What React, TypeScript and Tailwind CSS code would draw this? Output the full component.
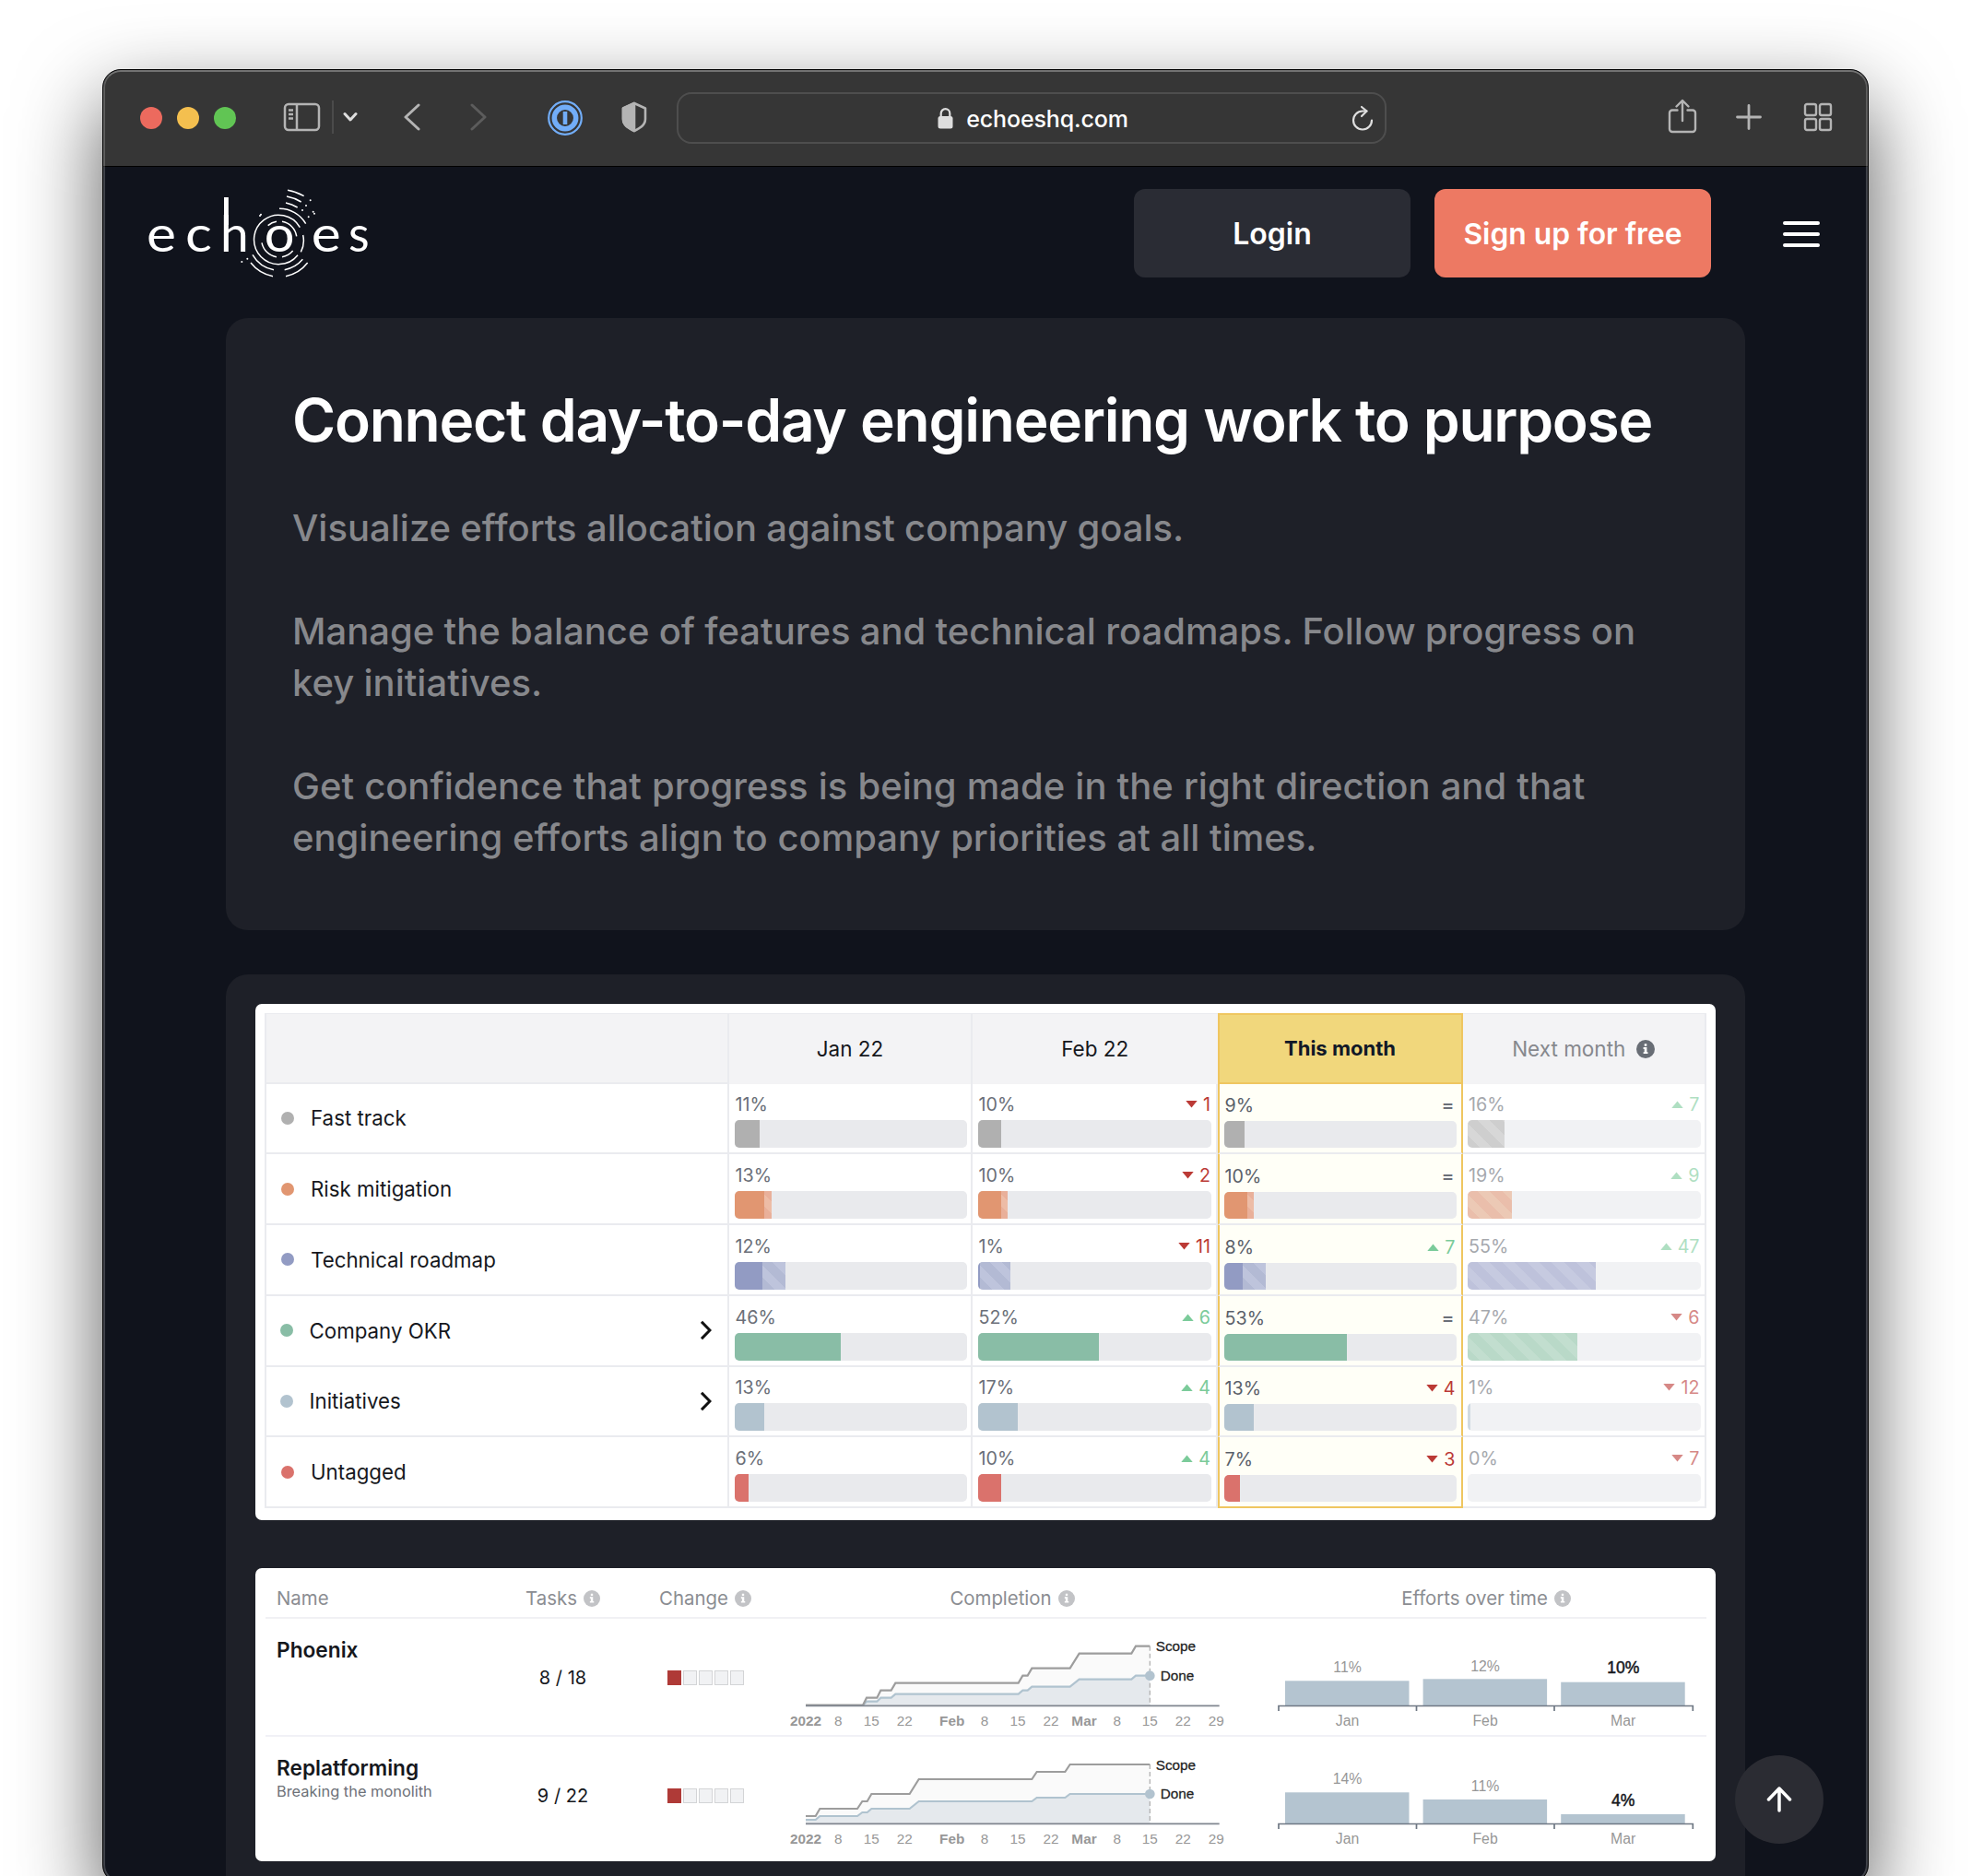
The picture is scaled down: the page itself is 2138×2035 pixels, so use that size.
import React from "react";

type Tone = "gray" | "orange" | "blue" | "green" | "steel" | "red";

const solid: Record<Tone, string> = {
  gray: "bg-[#b0b0b0]",
  orange: "bg-[#e19671]",
  blue: "bg-[#929bc3]",
  green: "bg-[#89bda6]",
  steel: "bg-[#b2c3cf]",
  red: "bg-[#da726c]",
};

const extraFill: Partial<Record<Tone, string>> = {
  orange: "bg-[repeating-linear-gradient(45deg,#e9b09a_0_9.5px,#edbca6_9.5px_19px)]",
  blue: "bg-[repeating-linear-gradient(45deg,#b3bad4_0_9.5px,#bec4dc_9.5px_19px)]",
};

const forecast: Record<Tone, string> = {
  gray: "bg-[repeating-linear-gradient(45deg,#afafaf_0_9.5px,#bebebe_9.5px_19px)]",
  orange: "bg-[repeating-linear-gradient(45deg,#dd9475_0_9.5px,#e1a685_9.5px_19px)]",
  blue: "bg-[repeating-linear-gradient(45deg,#939bc4_0_9.5px,#a1a8cd_9.5px_19px)]",
  green: "bg-[repeating-linear-gradient(45deg,#8bc0a5_0_9.5px,#9bc9b0_9.5px_19px)]",
  steel: "bg-[#b2c3cf]",
  red: "bg-[#da726c]",
};

type Cell = { pct: number; extra?: number; delta?: number | "=" };
type Row = { name: string; tone: Tone; nested?: boolean; cells: Cell[] };

const rows: Row[] = [
  { name: "Fast track", tone: "gray", cells: [{ pct: 11 }, { pct: 10, delta: -1 }, { pct: 9, delta: "=" }, { pct: 16, delta: 7 }] },
  { name: "Risk mitigation", tone: "orange", cells: [{ pct: 13, extra: 3 }, { pct: 10, extra: 3, delta: -2 }, { pct: 10, extra: 3, delta: "=" }, { pct: 19, delta: 9 }] },
  { name: "Technical roadmap", tone: "blue", cells: [{ pct: 12, extra: 10 }, { pct: 1, extra: 13, delta: -11 }, { pct: 8, extra: 10, delta: 7 }, { pct: 55, delta: 47 }] },
  { name: "Company OKR", tone: "green", nested: true, cells: [{ pct: 46 }, { pct: 52, delta: 6 }, { pct: 53, delta: "=" }, { pct: 47, delta: -6 }] },
  { name: "Initiatives", tone: "steel", nested: true, cells: [{ pct: 13 }, { pct: 17, delta: 4 }, { pct: 13, delta: -4 }, { pct: 1, delta: -12 }] },
  { name: "Untagged", tone: "red", cells: [{ pct: 6 }, { pct: 10, delta: 4 }, { pct: 7, delta: -3 }, { pct: 0, delta: -7 }] },
];

function Delta({ value }: { value?: number | "=" }) {
  if (value === undefined) return null;
  if (value === "=") return <span className="pr-px text-[21px] font-medium text-[#6b6f78]">=</span>;
  const up = value > 0;
  return (
    <span className={up ? "flex items-center gap-[6px] text-[#7bcb9a]" : "flex items-center gap-[6px] text-[#bb3a36]"}>
      <svg className="h-[8px] w-[13px]" viewBox="0 0 13 8" fill="currentColor">
        {up ? <path d="M0.300 8L6.500 0.500L12.700 8z" /> : <path d="M0.300 0H12.700L6.500 7.500z" />}
      </svg>
      {Math.abs(value)}
    </span>
  );
}

function BarCell({ cell, tone, col, last }: { cell: Cell; tone: Tone; col: number; last: boolean }) {
  const current = col === 2;
  const next = col === 3;
  const frame = current
    ? last
      ? "border-x-2 border-b-2 border-[#efc660] bg-[#fffff7] pl-[5px] pr-[5px]"
      : "border-x-2 border-x-[#efc660] border-b-2 border-b-[#eaebef] bg-[#fffff7] pl-[5px] pr-[5px]"
    : next
      ? "border-b-2 border-r-2 border-[#eaebef] pl-[5.5px] pr-[4.5px]"
      : "border-b-2 border-r-2 border-[#eaebef] pl-[5.5px] pr-[4.5px]";
  return (
    <div className={`flex min-w-0 flex-col justify-end pb-[5px] ${frame}`}>
      <div className={next ? "flex flex-col opacity-60" : "flex flex-col"}>
        <div className={`flex h-[26px] items-center justify-between px-px text-[19.7px] leading-[26px] ${current ? "text-[#5a5f69]" : "text-[#6b6f78]"}`}>
          <span>{cell.pct}%</span>
          <Delta value={cell.delta} />
        </div>
        <div className={`mt-[4px] flex overflow-hidden rounded-[5px] bg-[#e9eaed] ${current ? "h-[29px]" : "h-[30px]"}`}>
          <div className={next ? forecast[tone] : solid[tone]} style={{ width: `${cell.pct}%` }} />
          {cell.extra && <div className={extraFill[tone]} style={{ width: `${cell.extra}%` }} />}
        </div>
      </div>
    </div>
  );
}

function InfoIcon({ className }: { className: string }) {
  return (
    <svg className={className} viewBox="0 0 20 20">
      <circle cx="10" cy="10" r="10" fill="currentColor" />
      <path d="M8.7 4.3h2.6v2.4H8.7zM7.6 8.1h3.8v5.2h1.1v1.8H7.6v-1.8h1.1V9.9H7.6z" fill="#fff" />
    </svg>
  );
}

const allocationGrid = "grid grid-cols-[504.5px_264px_265.5px_266px_264.5px]";

function AllocationTable() {
  return (
    <div className="h-[560px] w-[1584px] rounded-[7px] bg-white pl-[10px] pt-[10px]">
      <div className={`${allocationGrid} h-[76.500px] w-[1564.500px] text-[22.5px] text-[#16181d]`}>
        <div className="border-2 border-t border-[#eaebef] bg-[#f3f3f5]" />
        <div className="flex items-center justify-center border-r-2 border-t border-[#eaebef] bg-[#f3f3f5]">Jan 22</div>
        <div className="flex items-center justify-center border-t border-[#eaebef] bg-[#f3f3f5]">Feb 22</div>
        <div className="flex items-center justify-center border-2 border-[#efc660] bg-[#f1d77c] text-[22px] font-bold text-[#111827]">This month</div>
        <div className="flex items-center justify-center gap-[12px] border-r-2 border-t border-[#eaebef] bg-[#f3f3f5] text-[#86888d]">
          Next month
          <InfoIcon className="size-[20px] text-[#686d75]" />
        </div>
      </div>
      {rows.map((row, i) => (
        <div key={row.name} className={`${allocationGrid} h-[76.800px] w-[1564.500px]`}>
          <div className={`flex items-center border-x-2 border-b-2 border-[#eaebef] pr-[17px] ${row.nested ? "pl-[15px]" : "pl-[16px]"}`}>
            <span className={`size-[14px] rounded-full ${solid[row.tone]}`} />
            <span className={`flex-1 text-[22.3px] text-[#16181d] ${row.nested ? "pl-[18px]" : "pl-[18.500px]"}`}>{row.name}</span>
            {row.nested && (
              <svg className="h-[22px] w-[12px]" viewBox="0 0 12 22" fill="none" stroke="#111" strokeWidth="3">
                <path d="M1 1.8L10 11L1 20.2" />
              </svg>
            )}
          </div>
          {row.cells.map((cell, c) => (
            <BarCell key={c} cell={cell} tone={row.tone} col={c} last={i === rows.length - 1} />
          ))}
        </div>
      ))}
    </div>
  );
}

const ticks: [string, number, boolean][] = [
  ["2022", 102, true], ["8", 208, false], ["15", 316, false], ["22", 424, false],
  ["Feb", 578, true], ["8", 684, false], ["15", 792, false], ["22", 900, false],
  ["Mar", 1008, true], ["8", 1115, false], ["15", 1222, false], ["22", 1330, false], ["29", 1438, false],
];

function CompletionChart({ scope, done, scopeY, doneY }: { scope: string; done: string; scopeY: number; doneY: number }) {
  return (
    <svg className="h-[128px] w-[520px] shrink-0 font-['Liberation_Sans',sans-serif]" viewBox="0 228 1560 384">
      <polygon points={`102,511 ${scope} 1222,511`} fill="#fafafa" />
      <polygon points={`${done} 1222,511 102,511`} fill="#e5e9ed" />
      <line x1="1222" x2="1222" y1={scopeY} y2="511" stroke="#b3b3b3" strokeWidth="4" strokeDasharray="15 9" />
      <polyline points={done} fill="none" stroke="#b0c3cf" strokeWidth="6.500" />
      <polyline points={scope} fill="none" stroke="#9d9d9d" strokeWidth="6.500" />
      <line x1="102" x2="1448" y1="511" y2="511" stroke="#80868f" strokeWidth="5.500" />
      <circle cx="1222" cy={doneY} r="16" fill="#b2c3cf" />
      <text x="1241" y={scopeY + 17} fontSize="46" fill="#1f1f1f" stroke="#1f1f1f" strokeWidth="0.8">Scope</text>
      <text x="1256" y={doneY + 16} fontSize="46" fill="#1f1f1f" stroke="#1f1f1f" strokeWidth="0.8">Done</text>
      {ticks.map(([label, x, bold]) => (
        <text key={x} x={x} y="577" textAnchor="middle" fontSize="46" fontWeight={bold ? 700 : 400} fill="#979797">
          {label}
        </text>
      ))}
    </svg>
  );
}

type Effort = { label: string; month: string; top: number; text: number };

function EffortsChart({ data }: { data: Effort[] }) {
  return (
    <svg className="h-[128px] w-[464px] font-['Liberation_Sans',sans-serif]" viewBox="0 0 464 128">
      {data.map((d, i) => {
        const x = 14 + i * 149.6;
        const now = i === 2;
        return (
          <g key={d.month} textAnchor="middle">
            <rect x={x} y={d.top} width="134.5" height={94 - d.top} fill="#b4c4d0" />
            <text x={x + 67.5} y={d.text} fontSize={now ? 17.5 : 15.8} fill={now ? "#16181d" : "#979797"} stroke={now ? "#16181d" : "none"} strokeWidth="0.5">
              {d.label}
            </text>
            <text x={x + 67.5} y="116.300" fontSize="15.800" fill="#979797">{d.month}</text>
          </g>
        );
      })}
      <path d="M7 100V94.5H456.3V100M156.5 94.5V100M306 94.5V100" fill="none" stroke="#6f7884" strokeWidth="1.7" />
    </svg>
  );
}

const projects = [
  {
    name: "Phoenix",
    note: "",
    tasks: "8 / 18",
    scope: "102,509 288,509 300,485 334,485 346,461 380,461 394,437 794,437 808,413 824,413 838,389 962,389 992,341 1162,341 1176,317 1222,317",
    done: "288,509 300,497 334,497 346,485 380,485 394,473 794,473 808,461 824,461 838,449 962,449 992,425 1162,425 1176,413 1222,413",
    scopeY: 317,
    doneY: 413,
    efforts: [
      { label: "11%", month: "Jan", top: 67.3, text: 58.3 },
      { label: "12%", month: "Feb", top: 65.3, text: 56.7 },
      { label: "10%", month: "Mar", top: 68.7, text: 59 },
    ],
  },
  {
    name: "Replatforming",
    note: "Breaking the monolith",
    tasks: "9 / 22",
    scope: "102,486 134,486 148,462 270,462 286,438 302,438 316,414 440,414 470,366 838,366 854,342 946,342 962,318 1222,318",
    done: "102,498 134,498 148,486 270,486 286,474 302,474 316,462 440,462 470,438 838,438 854,426 946,426 962,414 1222,414",
    scopeY: 318,
    doneY: 414,
    efforts: [
      { label: "14%", month: "Jan", top: 60.3, text: 51.3 },
      { label: "11%", month: "Feb", top: 68, text: 59 },
      { label: "4%", month: "Mar", top: 84, text: 74.7 },
    ],
  },
];

const initiativeGrid = "grid grid-cols-[239px_167px_142px_524px_20px_464px_7px]";

function HeaderCell({ children }: { children: React.ReactNode }) {
  return (
    <div className="flex items-center justify-center gap-[7px]">
      {children}
      <InfoIcon className="size-[18px] text-[#c2c3c6]" />
    </div>
  );
}

function InitiativesTable() {
  return (
    <div className="h-[318px] w-[1584px] rounded-[7px] bg-white pl-[11.5px]">
      <div className={`${initiativeGrid} h-[55px] w-[1563px] border-b-2 border-[#f1f1f4] pt-[13px] text-[20.4px] text-[#8b8d92]`}>
        <div className="flex items-center pl-[12px]">Name</div>
        <HeaderCell>Tasks</HeaderCell>
        <HeaderCell>Change</HeaderCell>
        <HeaderCell>Completion</HeaderCell>
        <div />
        <HeaderCell>Efforts over time</HeaderCell>
        <div />
      </div>
      {projects.map((p, i) => (
        <div key={p.name} className={`${initiativeGrid} h-[128px] w-[1563px] ${i === 0 ? "border-b-2 border-[#f1f1f6]" : ""}`}>
          <div className="pl-[12px] pt-[20px]">
            <div className="text-[22.7px] leading-[28px] font-semibold text-[#16181d]">{p.name}</div>
            <div className="whitespace-nowrap text-[16.4px] leading-[22px] text-[#6d7178]">{p.note}</div>
          </div>
          <div className="flex items-center justify-center text-[20px] text-[#16181d]">{p.tasks}</div>
          <div className="flex items-center justify-center gap-[2px]">
            <span className="h-[16px] w-[15px] bg-[#af3a37]" />
            {[1, 2, 3, 4].map((n) => (
              <span key={n} className="h-[16px] w-[15px] border border-[#d3d4d6] bg-[#f1f2f4]" />
            ))}
          </div>
          <div className="flex justify-end">
            <CompletionChart scope={p.scope} done={p.done} scopeY={p.scopeY} doneY={p.doneY} />
          </div>
          <div />
          <EffortsChart data={p.efforts} />
          <div />
        </div>
      ))}
    </div>
  );
}

const specks: [number, number][] = [
  [560, 67], [546, 84], [534, 99], [569, 104], [573, 110], [554, 121], [399, 113], [396, 117], [355, 257], [337, 267],
];

function Logo() {
  return (
    <svg className="h-[110px] w-[260px] font-[Lato,sans-serif]" viewBox="0 0 780 330">
      <g fill="#fff" fontSize="165" textAnchor="middle">
        <text transform="translate(75 233) scale(1.100 1)">e</text>
        <text transform="translate(196 233) scale(1.100 1)">c</text>
        <text transform="translate(313 233)">h</text>
        <text transform="translate(459 233) scale(1.050 1)">o</text>
        <text transform="translate(611 233) scale(1.100 1)">e</text>
        <text transform="translate(718 233) scale(0.950 1)">s</text>
        <rect x="279" y="57" width="14.500" height="90" />
      </g>
      <g fill="none" stroke="#fff" strokeWidth="4.500">
        <path d="M422 149A57 57 0 0 1 450 136M468 136A57 57 0 0 1 515 184M402 205A58 58 0 0 0 450 251M468 251A58 58 0 0 0 503 231" />
        <path d="M526 155A80 80 0 1 0 519 245M536 180A80 80 0 0 1 529 235" />
        <path d="M459 94A99 99 0 0 1 545 143M372 244A101 101 0 0 0 441 293M476 293A101 101 0 0 0 535 259" />
        <path d="M366 270A121 121 0 0 0 438 314M480 314A121 121 0 0 0 551 270" />
        <path d="M480 75A120 120 0 0 1 518 90M483 54A141 141 0 0 1 530 72M486 34A161 161 0 0 1 539 53" />
      </g>
      {specks.map(([x, y]) => (
        <circle key={`${x}-${y}`} cx={x} cy={y} r="3" fill="#fff" />
      ))}
    </svg>
  );
}

function Toolbar() {
  return (
    <div className="flex h-[105px] items-center justify-between border-b border-black bg-[#363636] pl-[40px] pr-[38px] pb-[3px] text-[#b4b4b4]">
      <div className="flex w-[582px] shrink-0 items-center">
        <div className="flex gap-[16px] pt-[3px]">
          <span className="size-[24px] rounded-full bg-[#ec6a5e]" />
          <span className="size-[24px] rounded-full bg-[#f4bf4f]" />
          <span className="size-[24px] rounded-full bg-[#61c554]" />
        </div>
        <svg className="ml-[51px] h-[32px] w-[41px]" viewBox="0 0 41 32" fill="none" stroke="currentColor" strokeWidth="2.5">
          <rect x="2" y="2" width="37" height="28" rx="4" />
          <path d="M15 2V30M6 8.500h5M6 13h5M6 17.500h5" />
        </svg>
        <span className="ml-[12px] h-[36px] w-[2px] bg-[#4b4b4b]" />
        <svg className="ml-[10px] h-[12px] w-[16px]" viewBox="0 0 16 12" fill="none" stroke="#dedede" strokeWidth="3" strokeLinecap="round" strokeLinejoin="round">
          <path d="M2 2.500L8 9L14 2.500" />
        </svg>
        <svg className="ml-[50px] h-[30px] w-[18px]" viewBox="0 0 18 30" fill="none" stroke="currentColor" strokeWidth="3" strokeLinecap="round" strokeLinejoin="round">
          <path d="M16 2L2 15L16 28" />
        </svg>
        <svg className="ml-[54px] h-[30px] w-[18px] text-[#5c5c5c]" viewBox="0 0 18 30" fill="none" stroke="currentColor" strokeWidth="3" strokeLinecap="round" strokeLinejoin="round">
          <path d="M2 2L16 15L2 28" />
        </svg>
        <svg className="ml-[66px] mt-[2px] size-[38px]" viewBox="0 0 38 38" fill="none" stroke="#72adf8">
          <circle cx="19" cy="19" r="17.800" strokeWidth="2.200" />
          <circle cx="19" cy="19" r="11.700" strokeWidth="5.500" />
          <path d="M19 12V26" strokeWidth="4.600" />
        </svg>
        <svg className="ml-[41px] h-[34px] w-[30px]" viewBox="0 0 30 34" fill="none" stroke="currentColor" strokeWidth="2.600" strokeLinejoin="round">
          <path d="M15 2L27 7.500V19C27 26 21 29 15 32C9 29 3 26 3 19V7.500Z" />
          <path d="M15 2V32C9 29 3 26 3 19V7.500Z" fill="currentColor" />
        </svg>
      </div>
      <div className="mt-[3px] flex h-[56px] w-[770px] items-center rounded-[16px] border-2 border-[#4e4e4e] pr-[12px]">
        <div className="flex flex-1 items-center justify-center pl-[39px] text-[25px] tracking-[-0.005em] text-white">
          <svg className="mr-[14px] h-[24px] w-[17px]" viewBox="0 0 17 24" fill="#dedede">
            <rect x="0.500" y="10" width="16" height="13.500" rx="2.500" />
            <path d="M3.700 11V7a4.800 4.800 0 0 1 9.600 0v4" fill="none" stroke="#dedede" strokeWidth="2.200" />
          </svg>
          <span className="pt-[3px] font-medium">echoeshq.com</span>
        </div>
        <svg className="h-[28px] w-[24px]" viewBox="0 0 24 28" fill="none" stroke="#dedede" strokeWidth="2.200" strokeLinecap="round" strokeLinejoin="round">
          <path d="M22 16.500A10 10 0 1 1 12 6.500H16.500" />
          <path d="M11 2L16.500 6.500L11 12" />
        </svg>
      </div>
      <div className="ml-auto flex items-center">
        <svg className="mb-[2px] h-[38px] w-[32px]" viewBox="0 0 32 38" fill="none" stroke="currentColor" strokeWidth="2.400" strokeLinecap="round" strokeLinejoin="round">
          <path d="M10.500 12.500H5a3 3 0 0 0-3 3V33a3 3 0 0 0 3 3H27a3 3 0 0 0 3-3V15.500a3 3 0 0 0-3-3H21.500M16 24V2.500M9.500 8.500L16 2L22.500 8.500" />
        </svg>
        <svg className="ml-[42px] size-[28px]" viewBox="0 0 28 28" stroke="currentColor" strokeWidth="2.800" strokeLinecap="round">
          <path d="M14 1.500V26.500M1.500 14H26.500" />
        </svg>
        <svg className="ml-[45px] size-[32px]" viewBox="0 0 32 32" fill="none" stroke="currentColor" strokeWidth="2.400">
          <rect x="2" y="2" width="12" height="12" rx="2" />
          <rect x="18" y="2" width="12" height="12" rx="2" />
          <rect x="2" y="18" width="12" height="12" rx="2" />
          <rect x="18" y="18" width="12" height="12" rx="2" />
        </svg>
      </div>
    </div>
  );
}

export default function App() {
  return (
    <div className="h-[2035px] w-[2138px] overflow-hidden bg-white pl-[111px] pt-[75px] font-[Inter,sans-serif]">
      <div className="relative h-[1968px] w-[1916px] overflow-hidden rounded-[20px] border border-black bg-[#10131c] shadow-[0_36px_90px_rgba(0,0,0,0.65)]">
        <Toolbar />
        <header className="flex h-[164px] items-start pl-[38px] pt-[14px]">
          <Logo />
          <div className="ml-auto mr-[52px] mt-[10px] flex items-center">
            <button className="h-[96px] w-[300px] rounded-[12px] bg-[#2a2c34] pt-[2px] text-[32px] font-semibold text-white">Login</button>
            <button className="ml-[26px] h-[96px] w-[300px] rounded-[12px] bg-[#ed7963] pt-[2px] text-[31.8px] font-semibold text-white">Sign up for free</button>
            <div className="ml-[78px] mt-[2px] flex w-[40px] flex-col gap-[8px]">
              <span className="h-[4px] rounded-full bg-white" />
              <span className="h-[4px] rounded-full bg-white" />
              <span className="h-[4px] rounded-full bg-white" />
            </div>
          </div>
        </header>
        <main className="flex flex-col gap-[48px] px-[133px]">
          <section className="h-[664px] w-[1648px] rounded-[24px] bg-[#1e2028] px-[72px] pt-[71px]">
            <h1 className="whitespace-nowrap text-[64px] leading-[80px] font-semibold tracking-[-0.0195em] text-white [word-spacing:0.4px]">
              Connect day-to-day engineering work to purpose
            </h1>
            <div className="mt-[49px] flex flex-col gap-[56px] whitespace-nowrap text-[40px] leading-[56px] font-medium text-[#87888c]">
              <p className="[word-spacing:-0.4px]">Visualize efforts allocation against company goals.</p>
              <p className="[word-spacing:-0.35px]">
                Manage the balance of features and technical roadmaps. Follow progress on
                <br />
                key initiatives.
              </p>
              <p>
                <span className="[word-spacing:0.45px]">Get confidence that progress is being made in the right direction and that</span>
                <br />
                engineering efforts align to company priorities at all times.
              </p>
            </div>
          </section>
          <section className="flex h-[1100px] w-[1648px] flex-col gap-[52px] rounded-[24px] bg-[#1e2028] pl-[31.5px] pt-[32px]">
            <AllocationTable />
            <InitiativesTable />
          </section>
        </main>
        <button className="absolute left-[1770px] top-[1828px] flex size-[96px] items-center justify-center rounded-full bg-[#2b2c33]">
          <svg className="h-[28px] w-[28px]" viewBox="0 0 28 28" fill="none" stroke="#fff" strokeWidth="3.500" strokeLinecap="round" strokeLinejoin="round">
            <path d="M14 26V2M2.500 14L14 2L25.500 14" />
          </svg>
        </button>
        <div className="pointer-events-none absolute inset-0 rounded-[19px] border-2 border-white/20 border-t-white/30" />
      </div>
    </div>
  );
}
